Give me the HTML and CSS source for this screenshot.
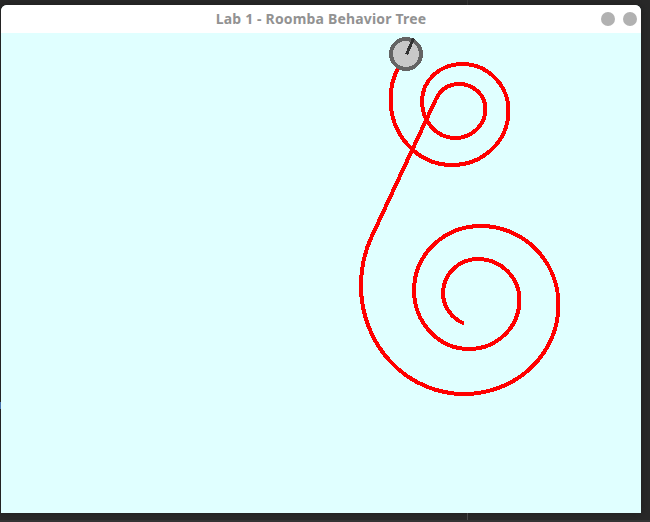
FILE: index.html
```
<!DOCTYPE html>
<html lang="en">
<head>
<meta charset="utf-8">
<title>Lab 1 - Roomba Behavior Tree</title>
<link rel="stylesheet" href="styles.css">
</head>
<body>
<main class="window">
  <header class="titlebar">
    <h1 class="title">Lab 1 - Roomba Behavior Tree</h1>
    <div class="controls"><span class="control"></span><span class="control"></span></div>
  </header>
  <svg class="canvas" viewBox="1 33 640 480" width="640" height="480" shape-rendering="crispEdges">
    <path class="trail" d="M464 323.500 C451 318 443 306 443 293 A35 34 0 0 1 478 259 A41.5 41 0 0 1 519.5 300 A50.5 49 0 0 1 469 349 A55 59 0 0 1 414 290 A67 64 0 0 1 481 226 A77.5 79 0 0 1 558.5 305 A94.5 89 0 0 1 464 394 A103 108 0 0 1 361 286 C361 268 364.5 252 371.5 237 L436 99 C441 89 449 84 459 84 A26.5 25 0 0 1 485.5 109 A30.5 29 0 0 1 455 138 A33 37 0 0 1 422 101 A40 37 0 0 1 462 64 A46.5 47 0 0 1 508.5 111 A56.5 54 0 0 1 452 165 A61.5 66 0 0 1 390.5 99 Q390.5 83 398 68"/>
    <circle class="robot" cx="406" cy="54" r="15"/>
    <path class="heading" d="M406.5 54.5 L413.5 38.5"/>
  </svg>
</main>
<footer class="desktop-edge"><span class="divider"></span></footer>
<span class="edge-mark"></span>
<span class="top-divider"></span>
</body>
</html>
```
FILE: styles.css
```
body {
  margin: 0;
  height: 522px;
  box-sizing: border-box;
  padding: 5px 0 0 1px;
  overflow: hidden;
  background: #292929;
}
.window {
  width: 640px;
  height: 508px;
  overflow: hidden;
  border-radius: 6px 6px 0 0;
  background: #e0ffff;
  box-shadow: 0 0 8px #1d1d1d;
}
.titlebar {
  display: grid;
  grid-template-columns: 1fr auto 1fr;
  align-items: center;
  height: 28px;
  background: #fff;
}
.title {
  grid-column: 2;
  margin: 0;
  font: 700 14px/28px "Noto Sans", "Open Sans", sans-serif;
  letter-spacing: 0.17px;
  color: #929292;
  white-space: nowrap;
}
.controls {
  display: flex;
  justify-content: flex-end;
  gap: 8px;
  padding-right: 4px;
}
.control {
  width: 14px;
  height: 14px;
  border-radius: 50%;
  background: #b1b1b1;
}
.canvas {
  display: block;
  background: #e0ffff;
}
.trail {
  fill: none;
  stroke: #f00;
  stroke-width: 4;
}
.robot {
  fill: #c8c8c8;
  stroke: #646464;
  stroke-width: 4;
}
.heading {
  fill: none;
  stroke: #323232;
  stroke-width: 3;
}
.desktop-edge {
  display: flex;
  height: 7px;
  margin-left: -1px;
  border-bottom: 2px solid #343434;
}
.divider {
  width: 1px;
  margin-left: 467px;
  background: #484848;
}
.edge-mark {
  position: absolute;
  left: 0;
  top: 402px;
  width: 1px;
  height: 7px;
  background: #4673ad;
}
.top-divider {
  position: absolute;
  left: 467px;
  top: 0;
  width: 1px;
  height: 5px;
  background: #333;
}
```
